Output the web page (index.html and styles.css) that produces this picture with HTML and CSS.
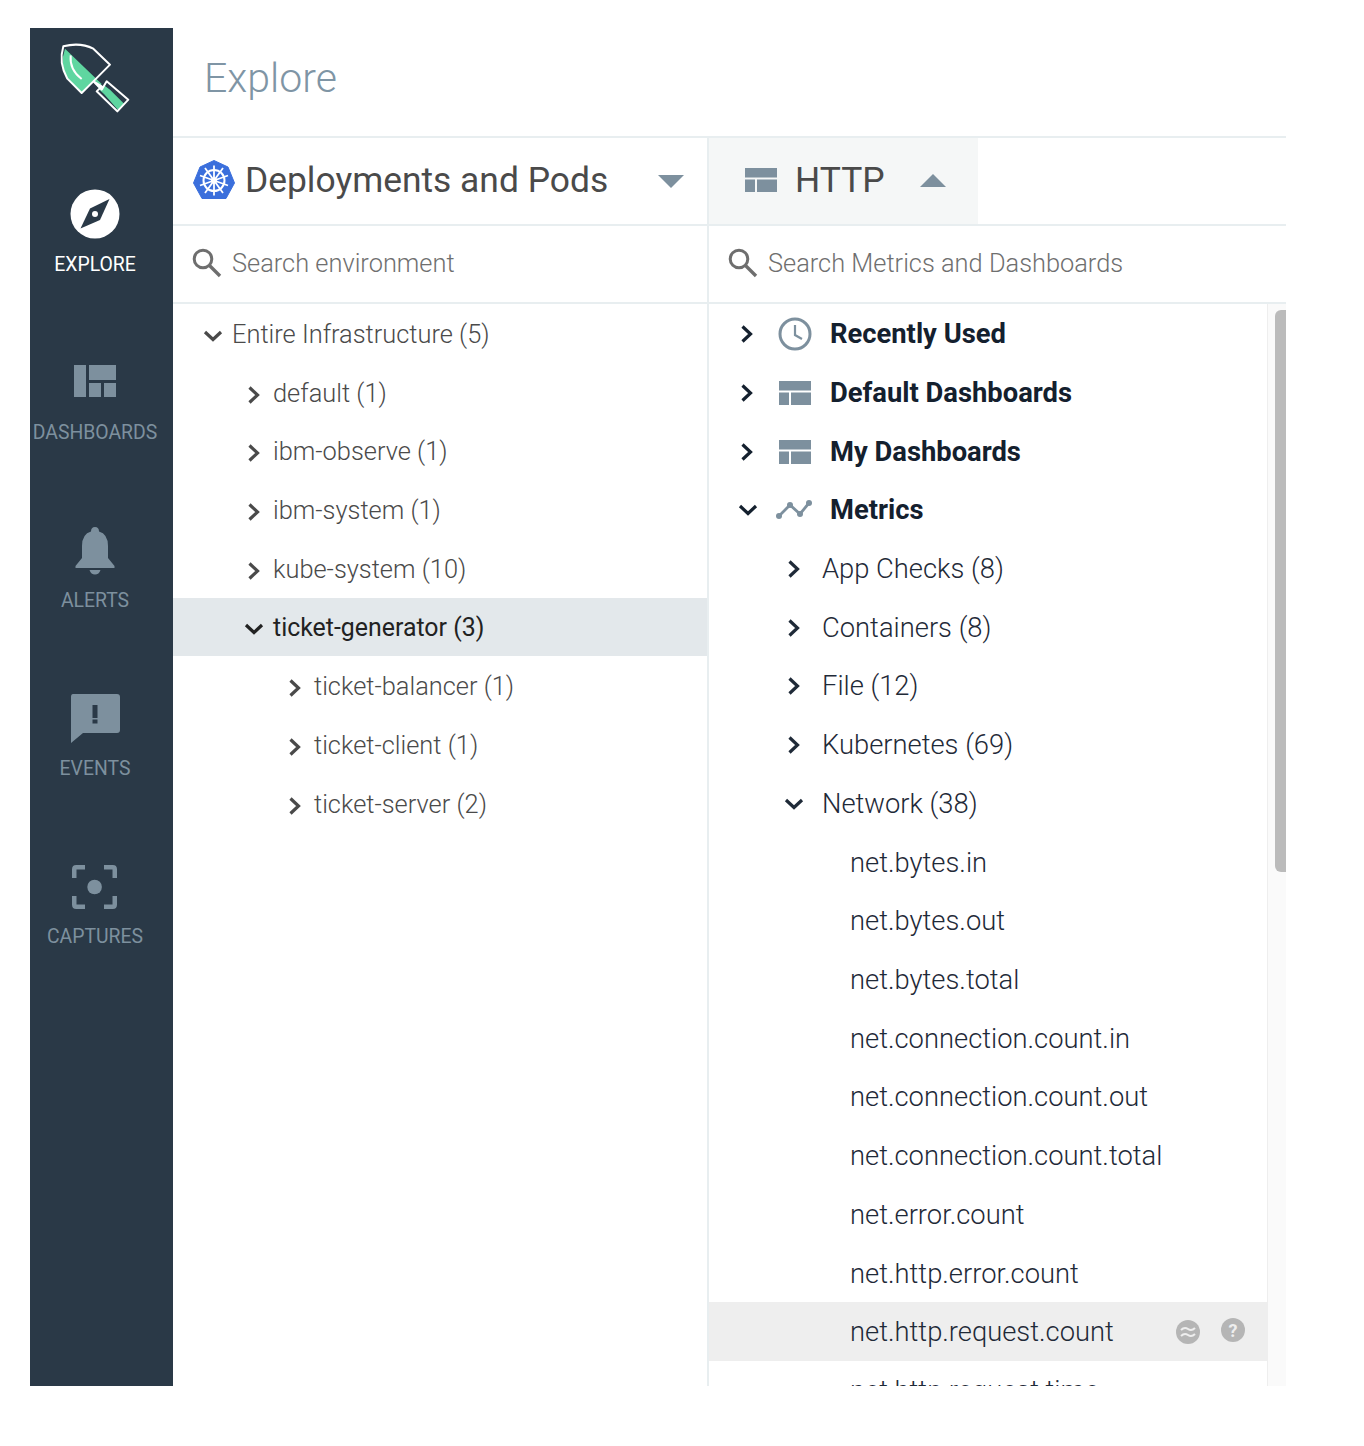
FILE: index.html
```html
<!DOCTYPE html>
<html lang="en">

<head>
    <meta charset="UTF-8">
    <title>Explore</title>
    <link rel="stylesheet" href="styles.css">
</head>

<body>
    <svg class="defs">
        <symbol id="chev-right" viewBox="0 0 20 20"><path d="M5.500 2.500 L13.500 10 L5.500 17.500" fill="none" stroke="currentColor" stroke-width="3.200"/></symbol>
        <symbol id="chev-down" viewBox="0 0 20 20"><path d="M2 6 L10 13.500 L18 6" fill="none" stroke="currentColor" stroke-width="3.200"/></symbol>
        <symbol id="search" viewBox="0 0 30 30"><circle cx="11" cy="11" r="8.800" fill="none" stroke="currentColor" stroke-width="3"/><path d="M17.500 17.500 L28 28" stroke="currentColor" stroke-width="3.400"/></symbol>
        <symbol id="layout" viewBox="0 0 32 24"><path d="M0 0 H32 V9.500 H0 Z M0 11.500 H10 V24 H0 Z M12 11.500 H32 V24 H12 Z" fill="currentColor"/></symbol>
    </svg>

    <div class="app">
        <nav class="sidebar">
            <div class="logo">
                <svg width="143" height="94" viewBox="0 0 429 282">
                    <path d="M105 62 L215 168 L205 180 L190 160 L155 195 L112 152 Q88 110 105 62 Z" fill="#5fd6a0"/>
                    <path d="M205 182 L222 198 L265 247 L283 228 L240 185 L222 172 Z" fill="#5fd6a0"/>
                    <path d="M100 55 Q150 42 190 62 L240 110 L190 160 L215 185 L230 160 L295 215 L262 250 L200 190 L215 175 L190 160 L155 195 L112 152 Q85 105 100 55 Z" fill="none" stroke="#fff" stroke-width="6" stroke-linejoin="round"/>
                    <path d="M122 82 Q118 125 155 153" fill="none" stroke="#fff" stroke-width="6"/>
                </svg>
            </div>
            <a class="nav-item active">
                <svg class="nav-icon" viewBox="0 0 50 50">
                    <circle cx="25" cy="25" r="24.500" fill="#fff"/>
                    <path d="M39.500 10 L30 31 L10.500 39.500 L20 19.500 Z" fill="#2a3947"/>
                    <circle cx="25" cy="25" r="3" fill="#fff"/>
                </svg>
                <span>EXPLORE</span>
            </a>
            <a class="nav-item">
                <svg class="nav-icon" viewBox="0 0 50 50">
                    <path d="M4 8 H16 V40 H4 Z M19 8 H46 V23 H19 Z M19 26 H31 V40 H19 Z M34 26 H46 V40 H34 Z" fill="currentColor"/>
                </svg>
                <span>DASHBOARDS</span>
            </a>
            <a class="nav-item">
                <svg class="nav-icon" viewBox="0 0 50 50">
                    <path d="M25 2 Q29 2 29 6.500 Q38 9 38 21 V33 L44.500 41 V43 H5.500 V41 L12 33 V21 Q12 9 21 6.500 Q21 2 25 2 Z M19.500 45 H30.500 Q29 49.500 25 49.500 Q21 49.500 19.500 45 Z" fill="currentColor"/>
                </svg>
                <span>ALERTS</span>
            </a>
            <a class="nav-item">
                <svg class="nav-icon" viewBox="0 0 50 50">
                    <path d="M3 1 H47 Q50 1 50 4 V37 Q50 40 47 40 H13 L1 50 V4 Q1 1 3 1 Z" fill="currentColor"/>
                    <path d="M22.500 12 H27.500 V25 H22.500 Z M22.500 26.500 H27.500 V30.500 H22.500 Z" fill="#2a3947"/>
                </svg>
                <span>EVENTS</span>
            </a>
            <a class="nav-item">
                <svg class="nav-icon" viewBox="0 0 50 50">
                    <path d="M15 6.250 H6.250 Q4.250 6.250 4.250 8.250 V17 M34 6.250 H42.750 Q44.750 6.250 44.750 8.250 V17 M4.250 35 V43.750 Q4.250 45.750 6.250 45.750 H15 M44.750 35 V43.750 Q44.750 45.750 42.750 45.750 H34" fill="none" stroke="currentColor" stroke-width="4.500"/>
                    <circle cx="24.600" cy="26" r="7.300" fill="currentColor"/>
                </svg>
                <span>CAPTURES</span>
            </a>
        </nav>

        <main class="main">
            <h1 class="page-title">Explore</h1>

            <div class="panes">
                <section class="pane pane-left">
                    <div class="tab-bar">
                        <div class="scope">
                            <svg class="k8s" viewBox="0 0 42 42">
                                <path d="M21 0.500 L35 7 L41.500 23 L33 38.500 L9 38.500 L0.500 23 L7 7 Z" fill="#3b6fdc" stroke="#3b6fdc" stroke-width="1" stroke-linejoin="round"/>
                                <circle cx="21" cy="20.500" r="10.500" fill="none" stroke="#fff" stroke-width="2"/>
                                <circle cx="21" cy="20.500" r="3" fill="#fff"/>
                                <path d="M21 5.500 V35.500 M7 15.500 L35 25.500 M35 15.500 L7 25.500 M12 33 L30 8 M30 33 L12 8" stroke="#fff" stroke-width="1.800"/>
                            </svg>
                            <span class="scope-name">Deployments and Pods</span>
                            <span class="caret-down"></span>
                        </div>
                    </div>
                    <div class="search">
                        <svg class="search-icon"><use href="#search"/></svg>
                        <span>Search environment</span>
                    </div>
                    <ul class="tree tree-env">
                        <li class="row lvl0"><svg class="chev"><use href="#chev-down"/></svg>Entire Infrastructure (5)</li>
                        <li class="row lvl1"><svg class="chev"><use href="#chev-right"/></svg>default (1)</li>
                        <li class="row lvl1"><svg class="chev"><use href="#chev-right"/></svg>ibm-observe (1)</li>
                        <li class="row lvl1"><svg class="chev"><use href="#chev-right"/></svg>ibm-system (1)</li>
                        <li class="row lvl1"><svg class="chev"><use href="#chev-right"/></svg>kube-system (10)</li>
                        <li class="row lvl1 selected"><svg class="chev"><use href="#chev-down"/></svg>ticket-generator (3)</li>
                        <li class="row lvl2"><svg class="chev"><use href="#chev-right"/></svg>ticket-balancer (1)</li>
                        <li class="row lvl2"><svg class="chev"><use href="#chev-right"/></svg>ticket-client (1)</li>
                        <li class="row lvl2"><svg class="chev"><use href="#chev-right"/></svg>ticket-server (2)</li>
                    </ul>
                </section>

                <section class="pane pane-right">
                    <div class="tab-bar">
                        <div class="tab-active">
                            <svg class="tab-icon"><use href="#layout"/></svg>
                            <span class="tab-name">HTTP</span>
                            <span class="caret-up"></span>
                        </div>
                    </div>
                    <div class="search">
                        <svg class="search-icon"><use href="#search"/></svg>
                        <span>Search Metrics and Dashboards</span>
                    </div>
                    <div class="metrics">
                        <ul class="tree tree-metrics">
                            <li class="row group"><svg class="chev"><use href="#chev-right"/></svg>
                                <svg class="group-icon clock" viewBox="0 0 34 34"><circle cx="17" cy="17" r="15" fill="none" stroke="currentColor" stroke-width="3"/><path d="M17 8 V18 L24 22" fill="none" stroke="currentColor" stroke-width="2.200"/></svg>Recently Used</li>
                            <li class="row group"><svg class="chev"><use href="#chev-right"/></svg>
                                <svg class="group-icon"><use href="#layout"/></svg>Default Dashboards</li>
                            <li class="row group"><svg class="chev"><use href="#chev-right"/></svg>
                                <svg class="group-icon"><use href="#layout"/></svg>My Dashboards</li>
                            <li class="row group open"><svg class="chev"><use href="#chev-down"/></svg>
                                <svg class="group-icon" viewBox="0 0 36 24"><path d="M3 18 L14 7 L24 16 L33 5" fill="none" stroke="currentColor" stroke-width="2.800"/><circle cx="3" cy="18" r="3" fill="currentColor"/><circle cx="14" cy="7" r="3" fill="currentColor"/><circle cx="24" cy="16" r="3" fill="currentColor"/><circle cx="33" cy="5" r="3" fill="currentColor"/></svg>Metrics</li>
                            <li class="row sub"><svg class="chev"><use href="#chev-right"/></svg>App Checks (8)</li>
                            <li class="row sub"><svg class="chev"><use href="#chev-right"/></svg>Containers (8)</li>
                            <li class="row sub"><svg class="chev"><use href="#chev-right"/></svg>File (12)</li>
                            <li class="row sub"><svg class="chev"><use href="#chev-right"/></svg>Kubernetes (69)</li>
                            <li class="row sub"><svg class="chev"><use href="#chev-down"/></svg>Network (38)</li>
                            <li class="row leaf">net.bytes.in</li>
                            <li class="row leaf">net.bytes.out</li>
                            <li class="row leaf">net.bytes.total</li>
                            <li class="row leaf">net.connection.count.in</li>
                            <li class="row leaf">net.connection.count.out</li>
                            <li class="row leaf">net.connection.count.total</li>
                            <li class="row leaf">net.error.count</li>
                            <li class="row leaf">net.http.error.count</li>
                            <li class="row leaf hovered">net.http.request.count
                                <span class="row-actions">
                                    <svg class="action" viewBox="0 0 24 24"><circle cx="12" cy="12" r="12" fill="#b5b5b5"/><path d="M5 10 Q8.500 6.500 12 9 T19 8 M5 16 Q8.500 12.500 12 15 T19 14" fill="none" stroke="#eee" stroke-width="2"/></svg>
                                    <svg class="action action-help" viewBox="0 0 24 24"><circle cx="12" cy="12" r="12" fill="#b5b5b5"/><text x="12" y="18.500" text-anchor="middle" class="help-mark">?</text></svg>
                                </span>
                            </li>
                            <li class="row leaf">net.http.request.time</li>
                        </ul>
                        <div class="scroll-track">
                            <div class="scroll-thumb"></div>
                        </div>
                    </div>
                </section>
            </div>
        </main>
    </div>
</body>

</html>
```

FILE: styles.css
```css
body {
    font-family: Roboto, "Liberation Sans", sans-serif;
    background-color: #fff;
    margin: 0;
    padding: 28px 78px 60px 30px;
}

ul {
    list-style: none;
    margin: 0;
    padding: 0;
}

.defs {
    display: none;
}

.app {
    display: flex;
    height: 1358px;
    overflow: hidden;
}

/* left nav */
.sidebar {
    width: 143px;
    flex-shrink: 0;
    padding-right: 13px;
    box-sizing: border-box;
    background-color: #2a3947;
    color: #7d909e;
}

.logo {
    height: 142px;
}

.logo svg {
    display: block;
}

.nav-item {
    display: flex;
    flex-direction: column;
    align-items: center;
    height: 168px;
    padding-top: 19px;
    box-sizing: border-box;
    font-size: 19.4px;
    line-height: 24px;
}

.nav-item.active {
    color: #fff;
}

.nav-icon {
    width: 50px;
    height: 50px;
    margin-bottom: 14px;
}

/* main area */
.main {
    flex: 1;
    min-width: 0;
}

.page-title {
    height: 108px;
    margin: 0;
    padding-left: 31px;
    font-size: 41px;
    font-weight: 300;
    line-height: 101px;
    color: #7f95a5;
    box-sizing: border-box;
}

.panes {
    display: flex;
    border-top: 2px solid #e8eef0;
}

.pane-left {
    width: 534px;
    flex-shrink: 0;
    border-right: 2px solid #e8eef0;
}

.pane-right {
    flex: 1;
    min-width: 0;
}

.tab-bar {
    height: 86px;
    border-bottom: 2px solid #e8eef0;
}

.scope {
    display: flex;
    align-items: center;
    height: 100%;
    padding: 0 23px 2px 20px;
    box-sizing: border-box;
    font-size: 35.4px;
    color: #4a4a4a;
}

.k8s {
    width: 42px;
    height: 42px;
    margin: 2px 10px 0 0;
}

.scope-name {
    flex: 1;
}

.caret-down {
    border-left: 13px solid transparent;
    border-right: 13px solid transparent;
    border-top: 13px solid #7d909e;
    margin-top: 2px;
}

.caret-up {
    border-left: 13px solid transparent;
    border-right: 13px solid transparent;
    border-bottom: 13px solid #7d909e;
    margin-left: 35px;
}

.tab-active {
    display: flex;
    align-items: center;
    width: 269px;
    height: 100%;
    padding: 0 0 2px 36px;
    box-sizing: border-box;
    background-color: #f5f7f7;
    font-size: 35.4px;
    color: #4a4a4a;
}

.tab-icon {
    width: 32px;
    height: 24px;
    margin: 0 18px 0 0;
    color: #7d909e;
}

.search {
    display: flex;
    align-items: center;
    height: 76px;
    padding: 0 0 2px 19px;
    box-sizing: border-box;
    height: 78px;
    border-bottom: 2px solid #e8eef0;
    font-size: 25.4px;
    font-weight: 300;
    color: #6f6f6f;
}

.search-icon {
    width: 30px;
    height: 30px;
    margin-right: 10px;
    color: #6e6e6e;
}

/* trees */
.row {
    display: flex;
    align-items: center;
    height: 58.72px;
    padding-top: 1.500px;
    box-sizing: border-box;
    font-size: 27.35px;
    white-space: nowrap;
}

.chev {
    width: 20px;
    height: 20px;
    flex-shrink: 0;
}

.tree-env {
    color: #4a4a4a;
    font-weight: 300;
}

.tree-env .row {
    padding-top: 1px;
    font-size: 25.4px;
}

.tree-env .chev {
    margin: 4px 9px 0 0;
}

.lvl0 {
    padding-left: 30px;
}

.lvl1 {
    padding-left: 71px;
}

.lvl2 {
    padding-left: 112px;
}

.tree-env .selected {
    background-color: #e3e8eb;
    color: #222;
    font-size: 24.9px;
    font-weight: 400;
}

.metrics {
    display: flex;
    height: 1082px;
    overflow: hidden;
}

.tree-metrics {
    flex: 1;
    min-width: 0;
    color: #1f2a38;
    font-weight: 300;
}

.group {
    padding-left: 28px;
    font-weight: 700;
    color: #14202e;
}

.group .chev {
    color: #14202e;
}

.group-icon {
    width: 32px;
    height: 24px;
    margin: 0 19px 0 22px;
    color: #7d909e;
}

.group-icon.clock {
    height: 34px;
    width: 34px;
    margin: 0 18px 0 21px;
}

.group.open .chev {
    margin-left: 1px;
}

.group.open .group-icon {
    width: 36px;
    margin: 0 18px 0 18px;
}

.sub {
    padding-left: 75px;
}

.sub .chev {
    margin-right: 18px;
}

.leaf {
    padding-left: 141px;
}

.hovered {
    background-color: #eee;
}

.row-actions {
    display: flex;
    gap: 21px;
    margin-left: auto;
    margin-right: 22px;
}

.action {
    width: 24px;
    height: 24px;
}

.action-help {
    margin-top: -2px;
}

.help-mark {
    font-family: Roboto, sans-serif;
    font-size: 18px;
    font-weight: 700;
    fill: #eee;
}

.scroll-track {
    width: 19px;
    flex-shrink: 0;
    padding: 6px 0 0 7px;
    box-sizing: border-box;
    background-color: #fafafa;
    border-left: 1px solid #eee;
}

.scroll-thumb {
    height: 562px;
    background-color: #bbb;
    border-radius: 6px 0 0 6px;
}
```
